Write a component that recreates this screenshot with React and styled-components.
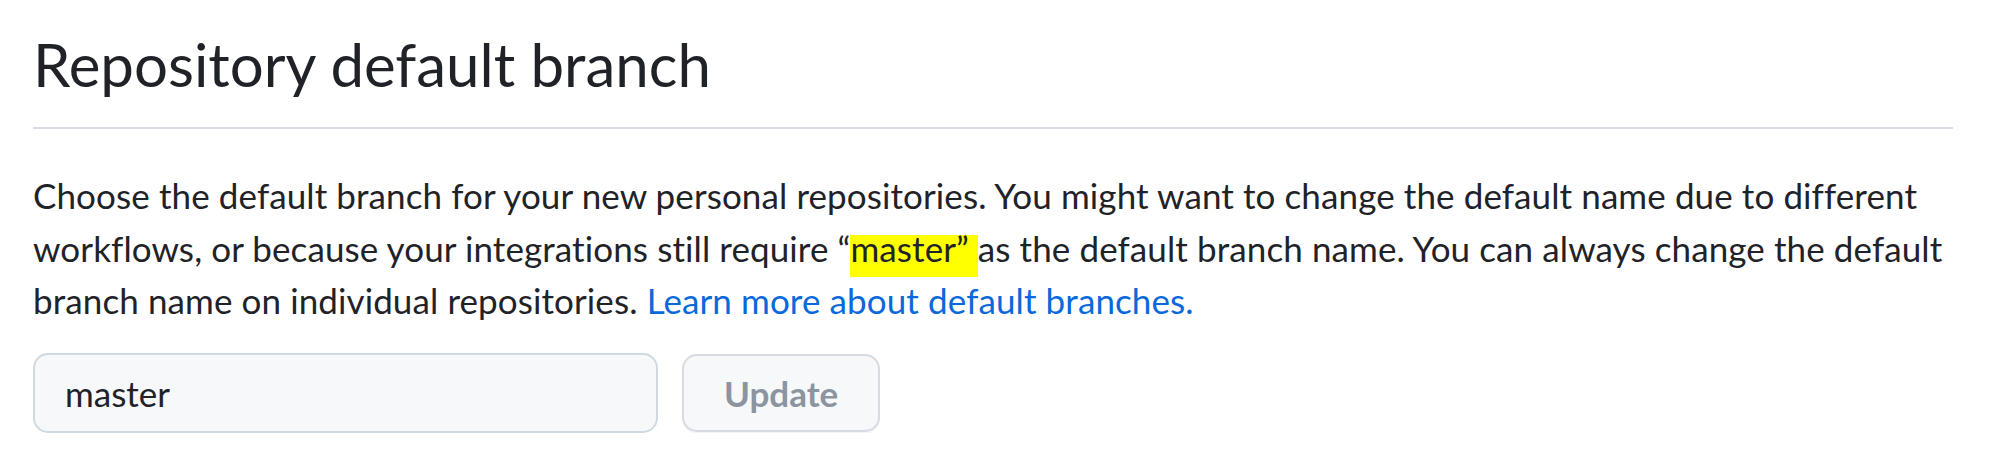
import React from "react";
import styled, { createGlobalStyle } from "styled-components";

const GlobalStyle = createGlobalStyle`
  html, body {
    margin: 0;
    padding: 0;
    background: #ffffff;
  }
  body {
    font-family: Lato, "Liberation Sans", sans-serif;
    color: #1f2328;
    -webkit-font-smoothing: antialiased;
  }
  * { box-sizing: border-box; }
`;

const Page = styled.main`
  width: 1920px;
  margin-left: 33px;
  padding-top: 17px;
`;

const Subhead = styled.div`
  display: flex;
  align-items: flex-end;
  padding-bottom: 18px;
  margin-bottom: 40px;
  border-bottom: 2px solid #d8dee4;
`;

const Heading = styled.h2`
  margin: 2px 0 0;
  font-size: 60px;
  font-weight: 400;
  line-height: 90px;
  color: #1f2328;
`;

const Description = styled.p`
  margin: 0 0 26px;
  font-size: 35px;
  line-height: 52.5px;
  letter-spacing: 0.1px;
  color: #1f2328;
`;

const Highlight = styled.mark`
  color: inherit;
  background: linear-gradient(to bottom, transparent 8px, #ffff00 8px);
  padding-bottom: 8px;
`;

const Link = styled.a`
  color: #0969da;
  text-decoration: none;
`;

const Form = styled.form`
  display: flex;
  align-items: center;
  gap: 24px;
`;

const BranchInput = styled.input`
  width: 625px;
  height: 80px;
  padding: 0 30px;
  font-family: inherit;
  font-size: 35px;
  color: #1f2328;
  background: #f6f8fa;
  border: 2px solid #d1d9e0;
  border-radius: 15px;
  outline: none;
`;

const Button = styled.button`
  height: 78px;
  padding: 0 40px;
  font-family: inherit;
  font-size: 35px;
  font-weight: 700;
  color: #8c959f;
  background: #f6f8fa;
  border: 2px solid #d6dbe1;
  border-radius: 15px;
  box-shadow: 0 2px 0 rgba(31, 35, 40, 0.04);
  cursor: not-allowed;
`;

export default function App() {
  return (
    <>
      <GlobalStyle />
      <Page>
        <Subhead>
          <Heading>Repository default branch</Heading>
        </Subhead>
        <Description>
          Choose the default branch for your new personal repositories. You might want to change the
          default name due to different workflows, or because your integrations still require “
          <Highlight>master” </Highlight>as the default branch name. You can always change the default
          branch name on individual repositories.{" "}
          <Link href="#">Learn more about default branches.</Link>
        </Description>
        <Form onSubmit={(e) => e.preventDefault()}>
          <BranchInput type="text" defaultValue="master" aria-label="Default branch name" />
          <Button type="submit" disabled>
            Update
          </Button>
        </Form>
      </Page>
    </>
  );
}
